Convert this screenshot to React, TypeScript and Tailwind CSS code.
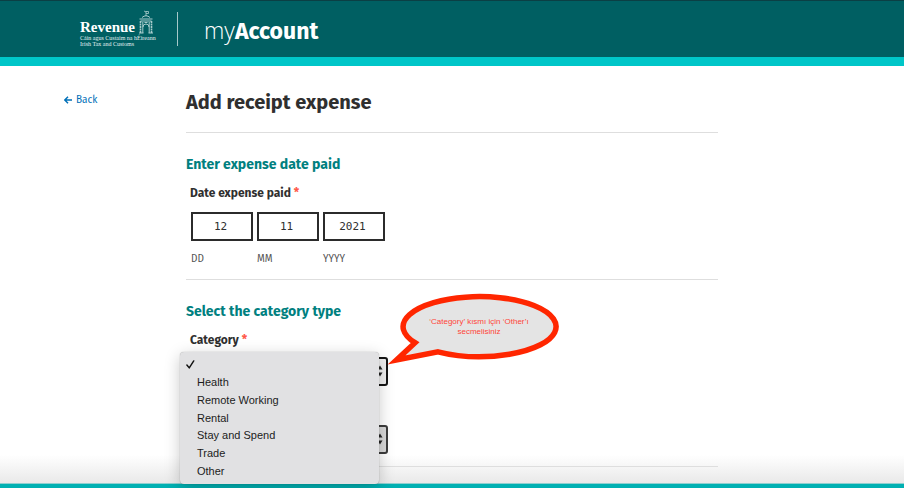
import type { ReactNode } from "react";

const CATEGORIES = ["", "Health", "Remote Working", "Rental", "Stay and Spend", "Trade", "Other"];

const DATE_PARTS = [
  { id: "day", hint: "DD", value: "12" },
  { id: "month", hint: "MM", value: "11" },
  { id: "year", hint: "YYYY", value: "2021" },
];

function Emblem() {
  return (
    <svg viewBox="0 0 16 24" className="h-6 w-4" fill="none" stroke="#a9cccc" aria-hidden="true">
      <path d="M8 6V1M8 1.500H10.500V3.500H8M6 1L8 2" strokeWidth="0.8" />
      <path d="M4 7.500Q8 4 12 7.500" strokeWidth="1" />
      <path d="M1.500 9H14.500M2.500 11H13.500" strokeWidth="1" />
      <path d="M2.500 11V23M13.500 11V23" strokeWidth="1.600" strokeDasharray="2 0.5" />
      <path d="M4.800 12V23M11.200 12V23" strokeWidth="1" />
      <path d="M5 17Q5 14 8 14T11 17M6.500 12.500H9.500" strokeWidth="1" />
      <path d="M1 23H5.500M10.500 23H15" strokeWidth="1" />
    </svg>
  );
}

function Header() {
  return (
    <header className="flex h-[66px] items-start border-t border-b-[9px] border-t-[#0b3f44] border-b-[#00c6c8] bg-[#005f62] pl-20 text-white">
      <div className="relative w-[97px] shrink-0 pt-[18px] font-['Liberation_Serif',serif]">
        <p className="text-[15px] leading-4 font-bold">Revenue</p>
        <p className="text-[6px] leading-[6px] whitespace-nowrap text-[#e4f0f0]">Cáin agus Custaim na hÉireann</p>
        <p className="text-[6px] leading-[6px] whitespace-nowrap text-[#e4f0f0]">Irish Tax and Customs</p>
        <span className="absolute top-[9px] left-[58px]">
          <Emblem />
        </span>
      </div>
      <span className="mt-[11px] h-[34px] w-px bg-[#a6c9ca]" />
      <p className="mt-[14px] ml-[26px] text-[23px] leading-[30px]">
        <span className="font-['Open_Sans',sans-serif] font-light">my</span>
        <span className="font-bold">Account</span>
      </p>
    </header>
  );
}

function SectionTitle({ children }: { children: ReactNode }) {
  return <h2 className="text-[14px] leading-5 font-bold text-[#00807f]">{children}</h2>;
}

function Required() {
  return <span className="text-[#ff5a4c]">*</span>;
}

function SelectBox({ id, label, tone }: { id: string; label?: string; tone: "active" | "idle" }) {
  return (
    <div className="relative ml-[5px] w-[197px]">
      <select
        id={id}
        aria-label={label}
        className={
          tone === "active"
            ? "block h-[29px] w-full appearance-none rounded-[3px] border-2 border-[#151515] bg-[#f0f0f0]"
            : "block h-[29px] w-full appearance-none rounded-[3px] border-2 border-[#3c3c3c] bg-[#d8d8d8]"
        }
      >
        <option value="" />
      </select>
      <svg viewBox="0 0 6 12" className="absolute top-2 right-[5px] h-3 w-[6px]" fill="#222" aria-hidden="true">
        <path d="M3 0.500L5.500 4.500H0.500ZM3 11.500L0.500 7.500H5.500Z" />
      </svg>
    </div>
  );
}

function CategoryMenu() {
  return (
    <ul
      role="listbox"
      aria-label="Category"
      className="absolute top-[52px] -left-[6px] z-10 grid h-[132px] w-[199px] auto-rows-fr rounded-[4px] bg-[#e1e1e3] py-1 font-['Liberation_Sans',sans-serif] text-[11px] text-[#1c1c1c] shadow-[0_4px_16px_rgba(0,0,0,0.22),0_0_1px_rgba(0,0,0,0.4)]"
    >
      {CATEGORIES.map((name) => (
        <li key={name} role="option" aria-selected={name === ""} className="flex items-center pl-[6px]">
          <span className="w-[11px]">
            {name === "" && (
              <svg viewBox="0 0 10 10" className="h-[9px] w-[9px]" fill="none" stroke="#111" strokeWidth="1.600" aria-hidden="true">
                <path d="M1 5.500L3.600 8.800L8.600 1" strokeLinecap="round" strokeLinejoin="round" />
              </svg>
            )}
          </span>
          {name}
        </li>
      ))}
    </ul>
  );
}

function Callout() {
  return (
    <div className="absolute -top-[10px] left-[196px] z-20 h-20 w-[178px]">
      <svg viewBox="0 0 178 80" className="absolute inset-0 h-20 w-[178px]" aria-hidden="true">
        <path
          d="M33 52.700A76.500 30 0 1 1 56 61.800L14.500 70Z"
          fill="#e4e4e4"
          stroke="#ff2600"
          strokeWidth="5.500"
          strokeMiterlimit="10"
        />
      </svg>
      <p className="relative ml-9 w-[122px] pt-[27px] text-center font-['Liberation_Sans',sans-serif] text-[8px] leading-[10px] text-[#ff4438]">
        ‘Category’ kısmı için ‘Other’ı secmelisiniz
      </p>
    </div>
  );
}

export default function App() {
  return (
    <div className="flex min-h-screen flex-col bg-white font-['Fira_Sans','Noto_Sans',sans-serif] text-[#2f2f2f]">
      <Header />
      <div className="flex flex-1 bg-linear-to-t from-[#e9e9e9] to-white to-[28px] pr-8 pl-16">
        <nav className="w-[122px] shrink-0 pt-[26px]">
          <a href="#" className="flex w-fit items-center gap-1 text-[10px] leading-4 text-[#0070b8]">
            <svg viewBox="0 0 10 10" className="h-2 w-2" fill="none" stroke="currentColor" strokeWidth="1.800" aria-hidden="true">
              <path d="M10 5H1.500M5 1L1 5L5 9" />
            </svg>
            Back
          </a>
        </nav>
        <main className="max-w-[532px] flex-1 pt-[22px]">
          <h1 className="text-[20px] leading-7 font-bold">Add receipt expense</h1>

          <section className="mt-4 border-t border-[#dedede] pt-[22px]">
            <SectionTitle>Enter expense date paid</SectionTitle>
            <fieldset className="mt-[10px] pl-1">
              <legend className="text-[12px] leading-4 font-bold">
                Date expense paid <Required />
              </legend>
              <div className="mt-[11px] flex gap-1 pl-px">
                {DATE_PARTS.map((part) => (
                  <div key={part.id} className="w-[62px]">
                    <input
                      id={part.id}
                      defaultValue={part.value}
                      className="block h-[29px] w-full border-2 border-[#2b2b2b] bg-white pr-[3px] text-center font-['DejaVu_Sans_Mono',monospace] text-[11px]"
                    />
                    <label htmlFor={part.id} className="mt-[10px] block text-[10px] leading-4 text-[#555]">
                      {part.hint}
                    </label>
                  </div>
                ))}
              </div>
            </fieldset>
          </section>

          <section className="relative mt-3 border-t border-[#dedede] pt-[22px]">
            <SectionTitle>Select the category type</SectionTitle>
            <label htmlFor="category" className="mt-[10px] block pl-1 text-[12px] leading-4 font-bold">
              Category <Required />
            </label>
            <div className="mt-[9px]">
              <SelectBox id="category" tone="active" />
            </div>
            <div className="mt-[39px]">
              <SelectBox id="expense-type" label="Expense type" tone="idle" />
            </div>
            <hr className="mt-3 border-[#dedede]" />
            <div className="absolute top-5 left-0">
              <CategoryMenu />
              <Callout />
            </div>
          </section>
        </main>
      </div>
      <footer className="h-[5px] border-t border-[#8fcfd0] bg-[#00b0b2]" />
    </div>
  );
}
